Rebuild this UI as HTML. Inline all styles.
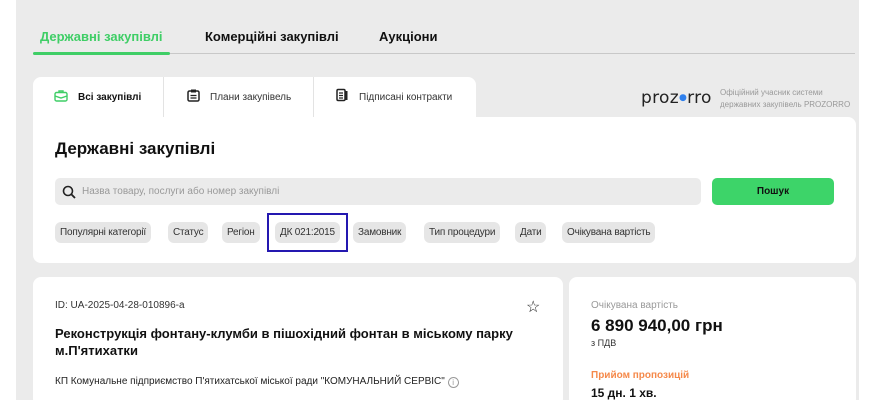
<!DOCTYPE html>
<html><head><meta charset="utf-8"><style>
*{box-sizing:border-box;margin:0;padding:0}
body{width:870px;height:400px;overflow:hidden;background:#fff;font-family:"Liberation Sans",sans-serif;color:#111;position:relative}
.bg{position:absolute;left:16px;top:0;width:843px;height:400px;background:#ebebeb}
.abs{position:absolute}
.tt{font-size:13px;font-weight:bold;top:29px}
.chip{position:absolute;top:222px;height:21px;background:#e6e6e6;border-radius:6px;font-size:10px;line-height:21px;padding:0 5px;color:#333;letter-spacing:-0.2px}
</style></head><body>
<div class="bg"></div>
<div class="abs tt" style="left:40px;color:#3fce66">Державні закупівлі</div>
<div class="abs tt" style="left:205px">Комерційні закупівлі</div>
<div class="abs tt" style="left:379px">Аукціони</div>
<div class="abs" style="left:33px;top:53px;width:822px;height:1px;background:#c8c8c8"></div>
<div class="abs" style="left:33px;top:52px;width:137px;height:3px;background:#3fce66;border-radius:2px"></div>

<div class="abs" style="left:33px;top:77px;width:443px;height:42px;background:#fff;border-radius:8px 8px 0 0"></div>
<div class="abs" style="left:163px;top:77px;width:1px;height:40px;background:#e3e3e3"></div>
<div class="abs" style="left:313px;top:77px;width:1px;height:40px;background:#e3e3e3"></div>
<div class="abs" style="left:163px;top:117px;width:313px;height:1px;background:#e3e3e3"></div>
<svg class="abs" style="left:54px;top:90px" width="14" height="12" viewBox="0 0 14 12"><rect x="1" y="2.5" width="12" height="8.5" rx="1.5" fill="none" stroke="#3fce66" stroke-width="1.4"/><path d="M5 2.5V1h4v1.5M1 6l6 2 6-2" fill="none" stroke="#3fce66" stroke-width="1.4"/></svg>
<div class="abs" style="left:78px;top:92px;font-size:10px;font-weight:bold">Всі закупівлі</div>
<svg class="abs" style="left:187px;top:89px" width="13" height="13" viewBox="0 0 13 13"><rect x="1" y="2" width="11" height="10" rx="1.5" fill="none" stroke="#222" stroke-width="1.5"/><rect x="4" y="0.5" width="5" height="3" fill="#222"/><path d="M3.5 6.5h6M3.5 9h6" stroke="#222" stroke-width="1.3"/></svg>
<div class="abs" style="left:210px;top:92px;font-size:10px;color:#333">Плани закупівель</div>
<svg class="abs" style="left:336px;top:88px" width="13" height="14" viewBox="0 0 13 14"><rect x="1" y="1.5" width="8" height="11" rx="1.2" fill="none" stroke="#222" stroke-width="1.5"/><path d="M3 5h4M3 7.5h4M3 10h4" stroke="#222" stroke-width="1.2"/><path d="M10.5 3v9" stroke="#222" stroke-width="2"/></svg>
<div class="abs" style="left:359px;top:92px;font-size:10px;color:#333">Підписані контракти</div>

<div class="abs" style="left:641px;top:88px;font-size:17px;letter-spacing:0.3px;color:#222;font-family:'DejaVu Sans',sans-serif">proz<span style="color:#2f80ed;font-size:9px;position:relative;top:-3px">●</span>rro</div>
<div class="abs" style="left:720px;top:87px;font-size:8px;color:#999;line-height:12px">Офіційний учасник системи<br>державних закупівель PROZORRO</div>

<div class="abs" style="left:33px;top:117px;width:823px;height:146px;background:#fff;border-radius:0 8px 8px 8px"></div>
<div class="abs" style="left:55px;top:139px;font-size:17px;font-weight:bold">Державні закупівлі</div>
<div class="abs" style="left:55px;top:178px;width:646px;height:27px;background:#ebebeb;border-radius:5px"></div>
<svg class="abs" style="left:62px;top:185px" width="14" height="14" viewBox="0 0 14 14"><circle cx="6" cy="6" r="4.5" fill="none" stroke="#222" stroke-width="1.6"/><path d="M9.3 9.3L13 13" stroke="#222" stroke-width="1.8"/></svg>
<div class="abs" style="left:82px;top:186px;font-size:10px;color:#999">Назва товару, послуги або номер закупівлі</div>
<div class="abs" style="left:712px;top:178px;width:122px;height:27px;background:#3dd469;border-radius:5px;font-size:10px;font-weight:bold;text-align:center;line-height:27px">Пошук</div>

<div class="chip" style="left:55px">Популярні категорії</div>
<div class="chip" style="left:168px">Статус</div>
<div class="chip" style="left:222px">Регіон</div>
<div class="chip" style="left:275px">ДК 021:2015</div>
<div class="abs" style="left:267px;top:213px;width:81px;height:39px;border:2px solid #2418b0"></div>
<div class="chip" style="left:353px">Замовник</div>
<div class="chip" style="left:424px">Тип процедури</div>
<div class="chip" style="left:515px">Дати</div>
<div class="chip" style="left:562px">Очікувана вартість</div>

<div class="abs" style="left:33px;top:277px;width:530px;height:130px;background:#fff;border-radius:8px"></div>
<div class="abs" style="left:569px;top:277px;width:287px;height:130px;background:#fff;border-radius:8px"></div>
<div class="abs" style="left:55px;top:300px;font-size:10px;color:#333">ID: UA-2025-04-28-010896-a</div>
<div class="abs" style="left:526px;top:297px;font-size:16px;color:#222">☆</div>
<div class="abs" style="left:55px;top:325px;font-size:13px;font-weight:bold;line-height:17px">Реконструкція фонтану-клумби в пішохідний фонтан в міському парку<br>м.П'ятихатки</div>
<div class="abs" style="left:55px;top:376px;font-size:10px;color:#222">КП Комунальне підприємство П'ятихатської міської ради "КОМУНАЛЬНИЙ СЕРВІС" <span style="display:inline-block;width:11px;height:11px;border:1px solid #999;border-radius:50%;font-size:8px;text-align:center;line-height:10px;color:#999;vertical-align:-1px">i</span></div>
<div class="abs" style="left:591px;top:300px;font-size:10px;color:#999">Очікувана вартість</div>
<div class="abs" style="left:591px;top:316px;font-size:17px;font-weight:bold">6 890 940,00 грн</div>
<div class="abs" style="left:591px;top:338px;font-size:9px;color:#333">з ПДВ</div>
<div class="abs" style="left:591px;top:370px;font-size:10px;font-weight:bold;color:#f5894a">Прийом пропозицій</div>
<div class="abs" style="left:591px;top:386px;font-size:12px;font-weight:bold">15 дн. 1 хв.</div>
</body></html>
